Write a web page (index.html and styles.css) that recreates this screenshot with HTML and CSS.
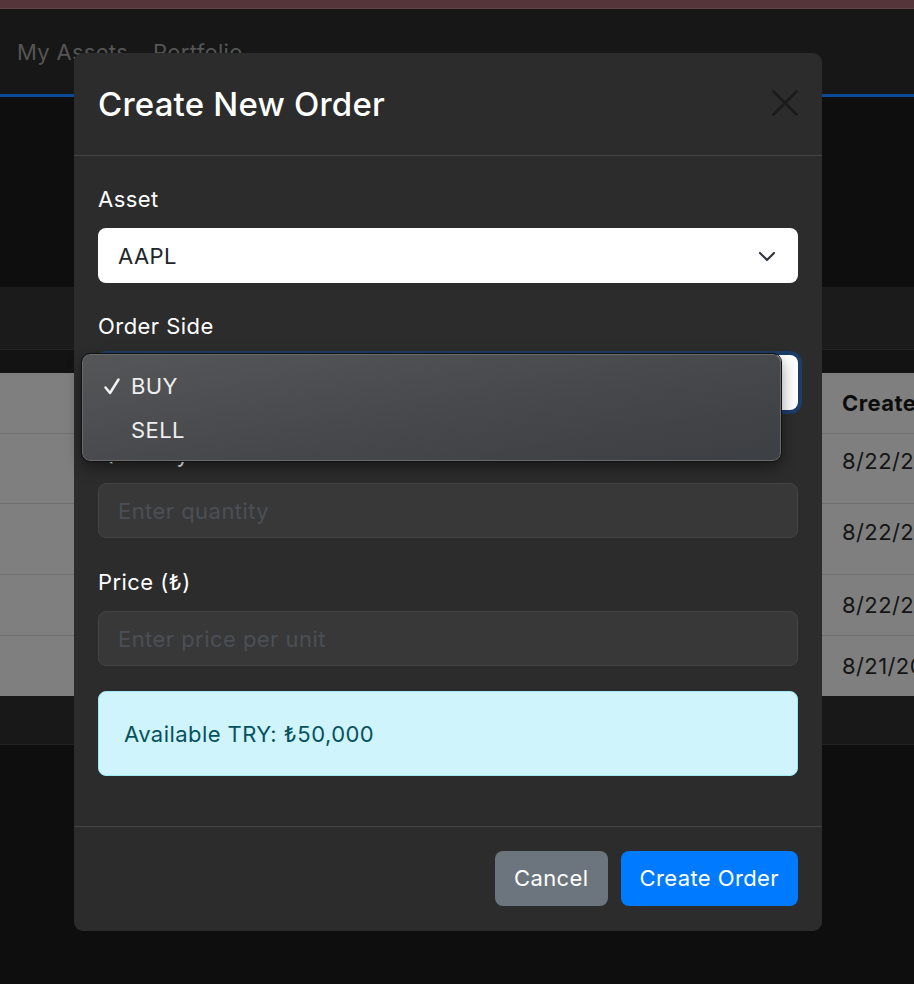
FILE: index.html
```html
<!DOCTYPE html>
<html lang="en">
<head>
<meta charset="utf-8">
<title>Create New Order</title>
<link rel="stylesheet" href="styles.css">
</head>
<body>
<div class="page">
  <div class="topbar"></div>
  <nav class="navbar">
    <a class="nav-link">My Assets</a>
    <a class="nav-link">Portfolio</a>
  </nav>
  <section class="hero"></section>
  <div class="card-header"></div>
  <div class="card-gap"></div>
  <table class="orders">
    <colgroup><col class="col-main"><col class="col-date"></colgroup>
    <thead>
      <tr class="row-h"><th></th><th>Created At</th></tr>
    </thead>
    <tbody>
      <tr class="row-a"><td></td><td class="td-high">8/22/2025, 14:32:10</td></tr>
      <tr class="row-b"><td></td><td class="td-high">8/22/2025, 13:05:44</td></tr>
      <tr class="row-c"><td></td><td>8/22/2025, 11:18:02</td></tr>
      <tr class="row-c"><td></td><td>8/21/2025, 16:47:29</td></tr>
    </tbody>
  </table>
  <div class="card-footer"></div>
</div>

<div class="modal">
  <div class="modal-header">
    <h4 class="modal-title">Create New Order</h4>
    <button class="btn-close" aria-label="Close">
      <svg width="26" height="26" viewBox="0 0 26 26"><path d="M1.5 1.5 L24.5 24.5 M24.5 1.5 L1.5 24.5" stroke="#1b1b1b" stroke-width="2.6" stroke-linecap="round"/></svg>
    </button>
  </div>
  <div class="modal-body">
    <div class="group group-first">
      <label class="label">Asset</label>
      <div class="select">
        <span>AAPL</span>
        <svg class="chev" width="18" height="12" viewBox="0 0 18 12"><path d="M2 3 L9 10 L16 3" fill="none" stroke="#343a40" stroke-width="2.2" stroke-linecap="round" stroke-linejoin="round"/></svg>
      </div>
    </div>
    <div class="group">
      <label class="label">Order Side</label>
      <div class="select select-focus">
        <span>BUY</span>
      </div>
      <div class="popup">
        <div class="popup-item"><span class="check"><svg width="18" height="18" viewBox="0 0 18 18"><path d="M2.5 10.5 L7 16 L15.5 2.5" fill="none" stroke="#f2f2f2" stroke-width="2.5" stroke-linecap="round" stroke-linejoin="round"/></svg></span>BUY</div>
        <div class="popup-item"><span class="check"></span>SELL</div>
      </div>
    </div>
    <div class="group">
      <label class="label">Quantity</label>
      <div class="input">Enter quantity</div>
    </div>
    <div class="group group-last">
      <label class="label">Price (₺)</label>
      <div class="input">Enter price per unit</div>
    </div>
    <div class="alert">Available TRY: ₺50,000</div>
  </div>
  <div class="modal-footer">
    <button class="btn btn-secondary">Cancel</button>
    <button class="btn btn-primary">Create Order</button>
  </div>
</div>
</body>
</html>
```

FILE: styles.css
```css
html, body {
  margin: 0;
  padding: 0;
  overflow: hidden;
  height: 100%;
}
body {
  background: #0e0e0e;
  font-family: Inter, "Noto Sans", "Liberation Sans", sans-serif;
  position: relative;
}
.page {
  display: flex;
  flex-direction: column;
}
.topbar {
  height: 8px;
  background: #553539;
  border-bottom: 1px solid #5e4649;
}
.navbar {
  height: 88px;
  box-sizing: border-box;
  background: #171717;
  border-bottom: 3px solid #0a4a99;
  display: flex;
  align-items: center;
  gap: 25px;
  padding: 0 17px;
}
.nav-link {
  color: #555555;
  font-size: 22px;
  letter-spacing: 0.3px;
}
.hero {
  height: 190px;
  background: #0e0e0e;
}
.card-header {
  height: 62px;
  background: #1b1b1b;
  border-bottom: 1px solid #222;
}
.card-gap {
  height: 23px;
  background: #131313;
}
.orders {
  width: 100%;
  table-layout: fixed;
  border-collapse: collapse;
  background: #7f7f7f;
}
.col-main { width: 830px; }
.orders th, .orders td {
  padding: 0 0 0 12px;
  white-space: nowrap;
  overflow: hidden;
  text-align: left;
  font-size: 22px;
  letter-spacing: 0.4px;
  color: #151515;
  border-bottom: 1px solid #707070;
}
.orders th {
  font-weight: 700;
  color: #0c0c0c;
}
.orders .td-high { padding-bottom: 14px; }
.row-h { height: 60px; }
.row-a { height: 70px; }
.row-b { height: 71px; }
.row-c { height: 61px; }
.orders tbody tr:last-child td { border-bottom: none; }
.card-footer {
  height: 48px;
  background: #181818;
  border-bottom: 1px solid #222;
}

/* Modal */
.modal {
  position: absolute;
  left: 74px;
  top: 53px;
  width: 748px;
  height: 878px;
  background: #2c2c2c;
  border-radius: 9px;
  display: flex;
  flex-direction: column;
  color: #ffffff;
}
.modal-header {
  height: 103px;
  box-sizing: border-box;
  border-bottom: 1px solid #454545;
  display: flex;
  align-items: center;
  justify-content: space-between;
  padding: 0 24px 0 24px;
}
.modal-title {
  margin: 0;
  font-size: 33px;
  font-weight: 500;
  letter-spacing: 0.2px;
}
.btn-close {
  background: none;
  border: none;
  padding: 0;
  width: 26px;
  height: 26px;
  display: flex;
  margin-top: -2px;
}
.modal-body {
  padding: 28px 24px 24px;
  flex: 1;
  display: flex;
  flex-direction: column;
}
.group {
  display: flex;
  flex-direction: column;
  margin-bottom: 29px;
  position: relative;
}
.group-first { margin-bottom: 28px; }
.group-last { margin-bottom: 25px; }
.label {
  font-size: 22px;
  letter-spacing: 0.45px;
  line-height: 30px;
  margin-bottom: 14px;
  color: #ffffff;
}
.select {
  height: 55px;
  box-sizing: border-box;
  background: #ffffff;
  border-radius: 8px;
  display: flex;
  align-items: center;
  justify-content: space-between;
  padding: 0 22px 0 20px;
  font-size: 22px;
  letter-spacing: 0.45px;
  color: #212529;
}
.select-focus {
  box-shadow: 0 0 0 4px #1d3d69;
}
.popup {
  position: absolute;
  z-index: 10;
  left: -16px;
  top: 43px;
  width: 699px;
  height: 107px;
  box-sizing: border-box;
  border-radius: 8px;
  border: 1px solid #6b6b6b;
  outline: 1px solid #111;
  background: linear-gradient(170deg, #545658 0%, #46484b 55%, #3c3f43 100%);
  box-shadow: 0 6px 16px rgba(0,0,0,0.45);
  padding: 9px 0 0 0;
  display: flex;
  flex-direction: column;
}
.popup-item {
  height: 44px;
  display: flex;
  align-items: center;
  font-size: 22px;
  letter-spacing: 0.4px;
  color: #efefef;
  padding-left: 20px;
}
.check {
  width: 28px;
  height: 18px;
  display: inline-flex;
  align-items: center;
}
.input {
  height: 55px;
  box-sizing: border-box;
  background: #383838;
  border: 1px solid #444444;
  border-radius: 8px;
  display: flex;
  align-items: center;
  padding: 0 19px;
  font-size: 22px;
  letter-spacing: 0.45px;
  color: #4b4f55;
}
.alert {
  height: 85px;
  box-sizing: border-box;
  background: #cff4fc;
  border: 1px solid #9eeaf9;
  border-radius: 8px;
  color: #055160;
  font-size: 22px;
  letter-spacing: 0.45px;
  display: flex;
  align-items: center;
  padding: 0 25px;
}
.modal-footer {
  height: 105px;
  box-sizing: border-box;
  border-top: 1px solid #454545;
  display: flex;
  align-items: center;
  justify-content: flex-end;
  gap: 13px;
  padding: 0 24px 2px;
}
.btn {
  height: 55px;
  border: none;
  border-radius: 8px;
  font-family: inherit;
  font-size: 22px;
  letter-spacing: 0.4px;
  color: #ffffff;
  padding: 0 19px;
}
.btn-secondary { background: #6c757d; }
.btn-primary { background: #007bff; }
```
